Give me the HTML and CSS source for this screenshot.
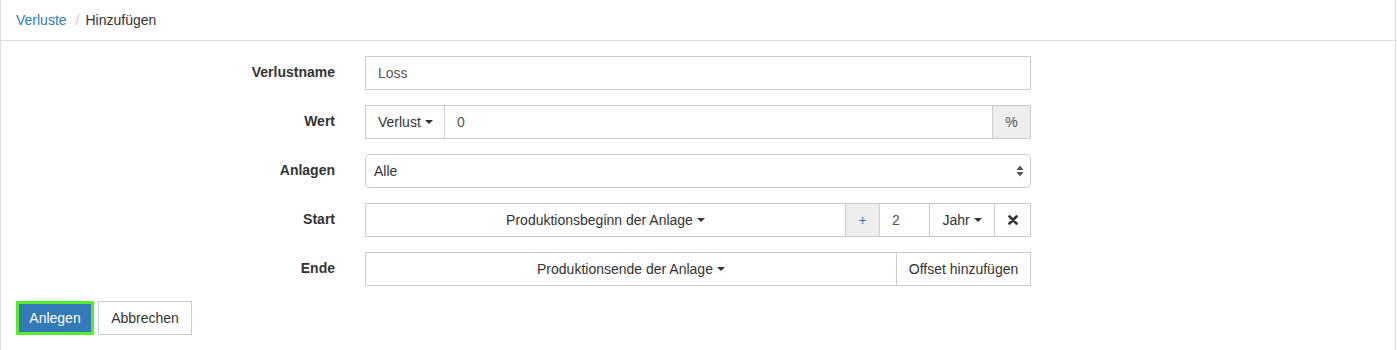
FILE: index.html
```html
<!DOCTYPE html>
<html>
<head>
<meta charset="utf-8">
<link rel="stylesheet" href="styles.css">
</head>
<body>
<div class="panel">
  <div class="crumbs">
    <a class="crumb-link">Verluste</a><span class="sep">/</span><span class="crumb-current">Hinzufügen</span>
  </div>
  <div class="body">
    <div class="row">
      <label class="lbl">Verlustname</label>
      <div class="ctl">
        <div class="input">Loss</div>
      </div>
    </div>
    <div class="row">
      <label class="lbl">Wert</label>
      <div class="ctl group">
        <div class="btn w-verlust">Verlust <span class="caret"></span></div>
        <div class="input grow">0</div>
        <div class="addon w-pct">%</div>
      </div>
    </div>
    <div class="row">
      <label class="lbl">Anlagen</label>
      <div class="ctl">
        <div class="select">Alle
          <svg class="updown" width="8" height="12" viewBox="0 0 8 12"><path d="M4 0.5 L7.5 5 L0.5 5 Z M4 11.5 L7.5 7 L0.5 7 Z" fill="#555"/></svg>
        </div>
      </div>
    </div>
    <div class="row">
      <label class="lbl">Start</label>
      <div class="ctl group">
        <div class="btn grow center">Produktionsbeginn der Anlage <span class="caret"></span></div>
        <div class="addon w-plus plus">+</div>
        <div class="input w-num">2</div>
        <div class="btn w-jahr center">Jahr <span class="caret"></span></div>
        <div class="btn w-x center">
          <svg width="10" height="10" viewBox="0 0 10 10"><path d="M1.5 1.5 L8.5 8.5 M8.5 1.5 L1.5 8.5" stroke="#333" stroke-width="2.6" stroke-linecap="round"/></svg>
        </div>
      </div>
    </div>
    <div class="row">
      <label class="lbl">Ende</label>
      <div class="ctl group">
        <div class="btn grow center">Produktionsende der Anlage <span class="caret"></span></div>
        <div class="btn w-offset center">Offset hinzufügen</div>
      </div>
    </div>
    <div class="actions">
      <button class="b-primary">Anlegen</button>
      <button class="b-default">Abbrechen</button>
    </div>
  </div>
</div>
</body>
</html>
```
FILE: styles.css
```css
html, body {
  margin: 0;
  padding: 0;
  background: #fff;
}
body {
  font-family: "Liberation Sans", Arial, sans-serif;
  font-size: 14px;
  color: #333;
}
.panel {
  width: 1394px;
  height: 350px;
  border-left: 1px solid #ddd;
  border-right: 1px solid #ddd;
  box-sizing: content-box;
}
.crumbs {
  height: 41px;
  border-bottom: 1px solid #ddd;
  display: flex;
  align-items: center;
  padding-left: 15px;
  box-sizing: border-box;
  line-height: 20px;
}
.crumb-link {
  color: #337ab7;
}
.sep {
  color: #ccc;
  padding: 0 6px 0 9px;
}
.crumb-current {
  color: #333;
}
.body {
  padding: 15px 0 0 0;
}
.row {
  display: flex;
  height: 34px;
  margin-bottom: 15px;
}
.lbl {
  width: 334px;
  text-align: right;
  font-weight: bold;
  padding-top: 8px;
  box-sizing: border-box;
}
.ctl {
  margin-left: 30px;
  width: 666px;
  display: flex;
}
.input, .btn, .addon, .select {
  height: 34px;
  box-sizing: border-box;
  border: 1px solid #ccc;
  display: flex;
  align-items: center;
  line-height: 20px;
}
.input {
  flex: 1;
  padding: 0 12px;
  color: #555;
}
.group > * + * {
  margin-left: -1px;
}
.grow {
  flex: 1;
}
.btn {
  padding: 0 12px;
  color: #333;
  background: #fff;
  white-space: nowrap;
}
.center {
  justify-content: center;
}
.addon {
  background: #eee;
  justify-content: center;
  color: #555;
}
.w-verlust { width: 80px; flex: none; }
.w-pct { width: 39px; flex: none; }
.w-plus { width: 35px; flex: none; }
.plus { color: #337ab7; }
.w-num { width: 51px; flex: none; }
.w-jahr { width: 66px; flex: none; padding: 0; }
.w-x { width: 37px; flex: none; padding: 0; }
.w-offset { width: 135px; flex: none; padding: 0; }
.caret {
  display: inline-block;
  width: 0;
  height: 0;
  margin-left: 4px;
  border-top: 4px solid #333;
  border-left: 4px solid transparent;
  border-right: 4px solid transparent;
  vertical-align: middle;
}
.select {
  flex: 1;
  border-radius: 4px;
  padding: 0 8px;
  color: #333;
  justify-content: space-between;
}
.updown {
  margin-right: -2px;
}
.actions {
  padding-left: 15px;
  padding-top: 0;
  display: flex;
  gap: 4px;
}
.actions button {
  font-family: "Liberation Sans", Arial, sans-serif;
  font-size: 14px;
  height: 34px;
  box-sizing: border-box;
  margin: 0;
  cursor: pointer;
  line-height: 20px;
}
.b-primary {
  width: 78px;
  background: #337ab7;
  color: #fff;
  border: 3px solid #55ee2e;
  padding: 0;
}
.b-default {
  width: 94px;
  background: #fff;
  color: #333;
  border: 1px solid #ccc;
  padding: 0;
}
```
